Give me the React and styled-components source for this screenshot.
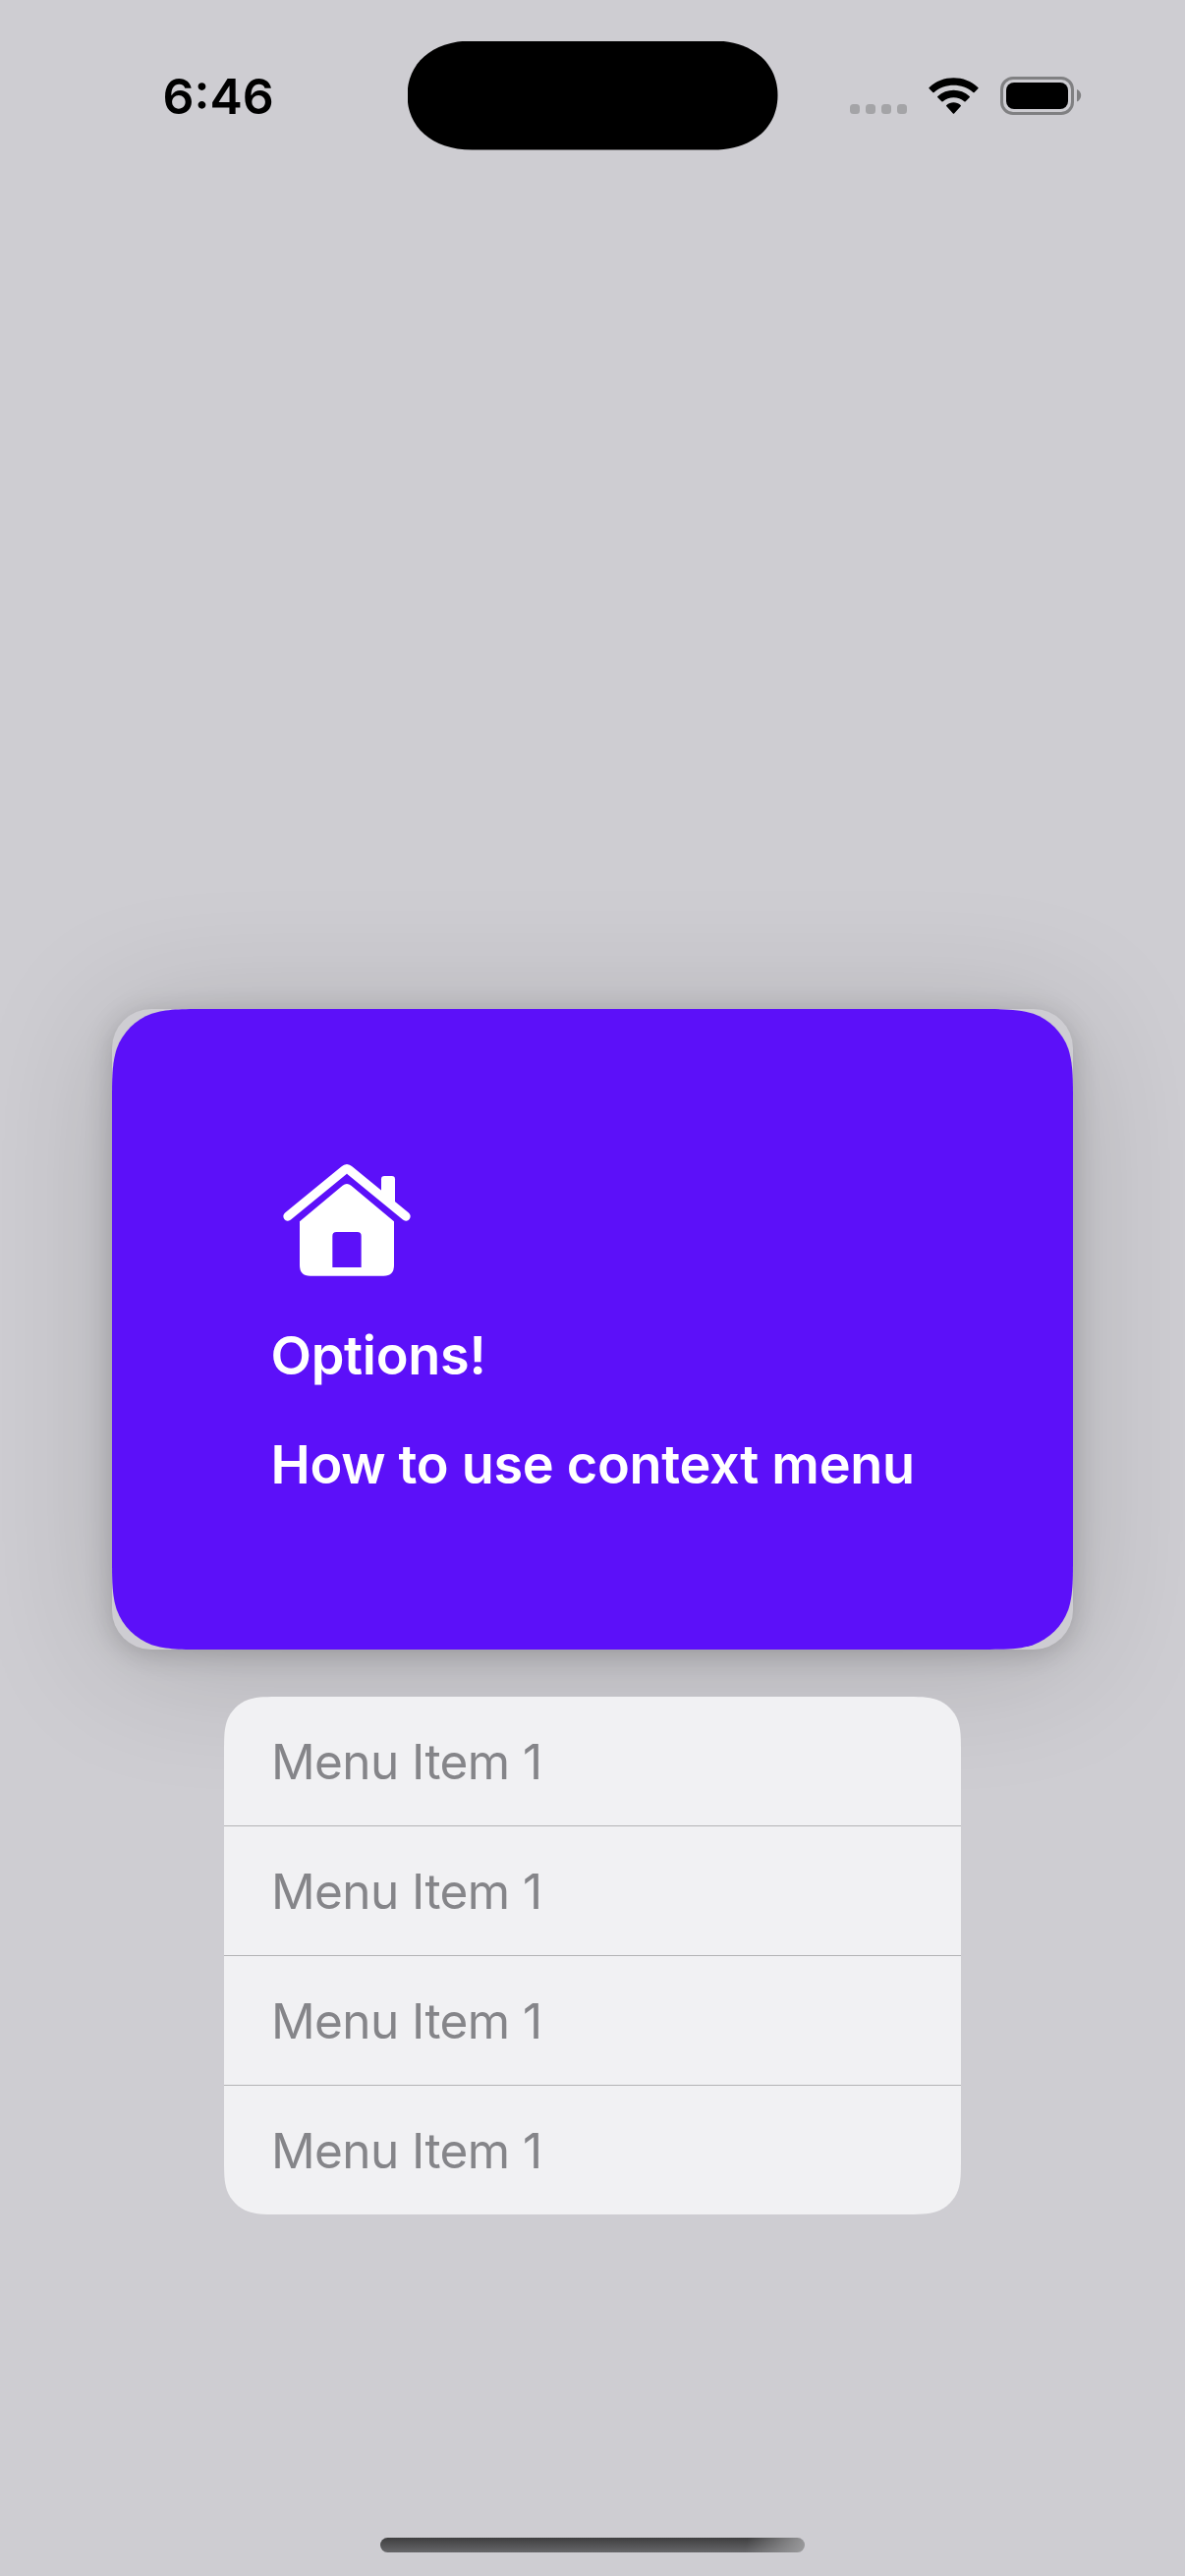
import React from "react";
import styled, { createGlobalStyle } from "styled-components";

// Continuous-curvature rounded rectangle, used for the card and the menu.
const squircle = (w, h, r) => {
  const corner = [
    [1.52866, 0], [1.08849, 0], [0.8684, 0], [0.63149, 0.07491],
    [0.37282, 0.16906], [0.16906, 0.37282], [0.07491, 0.63149],
    [0, 0.8684], [0, 1.08849], [0, 1.52866],
  ].map(([x, y]) => [x * r, y * r]);
  const back = [...corner].reverse();
  const draw = (pts, map, start) => {
    const p = pts.map(([x, y]) => map(x, y).map((n) => n.toFixed(2)).join(" "));
    return `${start} ${p[0]} C ${p.slice(1, 4).join(" ")} C ${p.slice(4, 7).join(" ")} C ${p.slice(7).join(" ")}`;
  };
  return [
    draw(corner, (x, y) => [w - x, y], "M"),
    draw(back, (x, y) => [w - x, h - y], "L"),
    draw(corner, (x, y) => [x, h - y], "L"),
    draw(back, (x, y) => [x, y], "L"),
    "Z",
  ].join(" ");
};

const GlobalStyle = createGlobalStyle`
  body {
    margin: 0;
    background: #cecdd2;
  }
  *, *::before, *::after { box-sizing: border-box; }
`;

const Screen = styled.div`
  display: flex;
  flex-direction: column;
  align-items: center;
  width: 1206px;
  height: 2622px;
  overflow: hidden;
  background: #cecdd2;
  font-family: Inter, "Liberation Sans", sans-serif;
`;

const StatusBar = styled.header`
  display: grid;
  grid-template-columns: 414.5px 377px 1fr;
  width: 100%;
  height: 153px;
  padding-top: 41.5px;
  flex: none;
`;

const Time = styled.time`
  padding: 26px 0 0 165.5px;
  font-size: 50px;
  line-height: 61px;
  font-weight: 600;
  letter-spacing: 0;
  color: #000;
`;

const Island = styled.div`
  height: 111px;
  background: #000;
  clip-path: path("M66 0 H311 C353 0 377 24 377 55.5 C377 87 353 111 311 111 H66 C24 111 0 87 0 55.5 C0 24 24 0 66 0 Z");
`;

const Indicators = styled.div`
  display: flex;
  align-items: flex-start;
  padding: 36.5px 0 0 73.5px;
`;

const Signal = styled.div`
  display: flex;
  gap: 6px;
  padding-top: 28px;
  margin-right: 22px;
`;

const SignalDot = styled.span`
  width: 10px;
  height: 10px;
  border-radius: 3.5px;
  background: #a4a4a7;
`;

const WifiIcon = styled.svg`
  width: 51px;
  height: 38px;
  margin: 1px 22px 0 0;
`;

const BatteryIcon = styled.svg`
  width: 83px;
  height: 39px;
`;

const PreviewCard = styled.section`
  width: 978px;
  height: 652px;
  margin-top: 874px;
  flex: none;
  border-radius: 40px;
  background: #cecdd2;
  box-shadow: 0 12px 136px rgba(0, 0, 0, 0.17), 0 5px 28px rgba(0, 0, 0, 0.18);
`;

const CardFace = styled.div`
  display: flex;
  flex-direction: column;
  align-items: flex-start;
  height: 100%;
  padding: 157px 0 0 161.5px;
  background: #5c10f9;
  clip-path: path("${squircle(978, 652, 64)}");
`;

const HouseIcon = styled.svg`
  width: 130px;
  height: 115px;
  margin: 0 0 49px 12.67px;
`;

const CardText = styled.p`
  margin: 0 0 48px;
  font-size: 54px;
  line-height: 63px;
  font-weight: 560;
  letter-spacing: -0.3px;
  white-space: nowrap;
  color: #fff;
`;

const Menu = styled.ul`
  width: 750px;
  margin: 48px 0 0;
  padding: 0;
  flex: none;
  list-style: none;
  background: #f1f1f3;
  clip-path: path("${squircle(750, 527, 39)}");
`;

const MenuItem = styled.li`
  display: flex;
  align-items: center;
  height: 132px;
  padding-left: 48px;
  border-bottom: 1px solid #b3b3b5;
  font-size: 49.5px;
  line-height: 60px;
  letter-spacing: -0.6px;
  color: #858589;

  &:last-child {
    height: 131px;
    border-bottom: 0;
  }
`;

const HomeIndicator = styled.div`
  width: 432px;
  height: 15px;
  margin: auto 0 24px;
  flex: none;
  border-radius: 7.5px;
  background:
    linear-gradient(100deg, rgba(158, 158, 160, 0) 86%, rgba(158, 158, 160, 0.95) 100%),
    linear-gradient(#3e3e3f, #67676a);
`;

const menuItems = ["Menu Item 1", "Menu Item 1", "Menu Item 1", "Menu Item 1"];

export default function App() {
  return (
    <>
      <GlobalStyle />
      <Screen>
        <StatusBar>
          <Time>6:46</Time>
          <Island />
          <Indicators>
            <Signal>
              {[0, 1, 2, 3].map((n) => <SignalDot key={n} />)}
            </Signal>
            <WifiIcon viewBox="0 0 153 114">
              <path d="M2 34 Q0 32 2 30 C42 -9 111 -9 151 30 Q153 32 151 34 L140 45 Q138 47 136 45 C103 16 50 16 17 45 Q15 47 13 45 Z" />
              <path d="M28 61 Q26 59 28 57 C55 32 98 32 125 57 Q127 59 125 61 L113 73 Q111 74 109 73 C91 57 62 57 44 73 Q42 74 40 73 Z" />
              <path d="M55 88 Q53 86 55 84 C67 73 86 73 98 84 Q100 86 98 88 L79 109 Q76.500 112 74 109 Z" />
            </WifiIcon>
            <BatteryIcon viewBox="0 0 83 39">
              <rect x="1.5" y="1.5" width="72" height="36" rx="11.500" fill="none" stroke="#808082" strokeWidth="3" />
              <rect x="6" y="6" width="63" height="27" rx="8" />
              <path d="M78 13 C80.700 14 82.200 16.500 82.200 19 S80.700 24.500 78 25.500 Z" fill="#808082" />
            </BatteryIcon>
          </Indicators>
        </StatusBar>

        <PreviewCard>
          <CardFace>
            <HouseIcon viewBox="86 72 390 345" fill="#fff">
              <path d="M101 234 L273 93 Q281 86 289 93 L461 234" fill="none" stroke="#fff" strokeWidth="28" strokeLinecap="round" strokeLinejoin="round" />
              <path d="M386 160 V121 Q386 111 396 111 H418 Q428 111 428 121 V194 Z" />
              <path fillRule="evenodd" d="M137 250 L268 140 Q281 130 294 140 L425 250 V384 Q425 416 393 416 H169 Q137 416 137 384 Z M237 390 H325 V294 Q325 282 313 282 H249 Q237 282 237 294 Z" />
            </HouseIcon>
            <CardText>Options!</CardText>
            <CardText>How to use context menu</CardText>
          </CardFace>
        </PreviewCard>

        <Menu>
          {menuItems.map((label, n) => <MenuItem key={n}>{label}</MenuItem>)}
        </Menu>

        <HomeIndicator />
      </Screen>
    </>
  );
}
